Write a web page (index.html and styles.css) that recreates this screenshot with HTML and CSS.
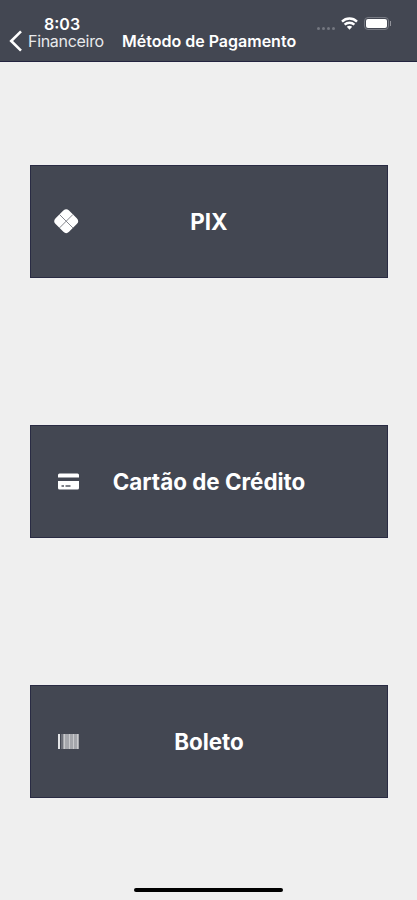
FILE: index.html
```html
<!DOCTYPE html>
<html lang="pt-BR">
<head>
    <meta charset="UTF-8">
    <meta name="viewport" content="width=device-width, initial-scale=1.0">
    <title>Método de Pagamento</title>
    <link rel="stylesheet" href="styles.css">
</head>
<body>
    <header class="header">
        <div class="status-bar">
            <span class="time">8:03</span>
            <div class="status-icons">
                <div class="signal"><i></i><i></i><i></i><i></i></div>
                <svg class="wifi" width="17" height="13" viewBox="0 0 17 13" fill="none" stroke="#fff" stroke-width="2.4">
                    <path d="M1 4.6C5.2.5 11.8.5 16 4.6"/>
                    <path d="M3.600 7.6c2.800-2.5 7-2.5 9.800 0"/>
                    <path d="M5.800 9.7c1.600-1.300 3.800-1.300 5.400 0L8.500 12.800z" fill="#fff" stroke="none"/>
                </svg>
                <div class="battery"><span></span></div>
            </div>
        </div>
        <nav class="nav-bar">
            <a href="#" class="back">
                <svg width="13" height="22" viewBox="0 0 13 22" fill="none" stroke="#fff" stroke-width="2.600">
                    <path d="M12 1.300L2.200 11l9.800 9.700"/>
                </svg>
                <span>Financeiro</span>
            </a>
            <h1>Método de Pagamento</h1>
        </nav>
    </header>
    <main class="methods">
        <button class="method">
            <svg class="icon" width="28" height="28" viewBox="0 0 28 28">
                <rect x="3.700" y="3.700" width="19" height="19" rx="4" fill="#fff" transform="rotate(45 13.200 13.200)"/>
                <path d="M6.500 6.500l13.400 13.400M19.900 6.500L6.500 19.900" stroke="#85878e" stroke-width="1"/>
            </svg>
            <span>PIX</span>
        </button>
        <button class="method">
            <svg class="icon" width="28" height="28" viewBox="0 0 28 28">
                <path d="M6.500 5.500h18q1.500 0 1.500 1.500v2.500H5V7q0-1.500 1.500-1.500z" fill="#fff"/>
                <path d="M5 13h21v7q0 1.500-1.500 1.500h-18Q5 21.500 5 20z" fill="#fff"/>
                <path d="M8.500 18h2.500M12.500 18h5" stroke="#555963" stroke-width="1.600"/>
            </svg>
            <span>Cartão de Crédito</span>
        </button>
        <button class="method">
            <svg class="icon" width="28" height="28" viewBox="0 0 28 28">
                <path d="M5 6h2v15H5z" fill="#e4e5e7"/>
                <path d="M8.500 6h1v15h-1z" fill="#9a9ca2"/>
                <path d="M10 6h16v15H10z" fill="#a5a7ac"/>
                <path d="M11.500 6v15M16.500 6v15M20.500 6v15M24.500 6v15" stroke="#c9cacd"/>
            </svg>
            <span>Boleto</span>
        </button>
    </main>
    <div class="home-indicator"></div>
</body>
</html>
```
FILE: styles.css
```css
* {
    box-sizing: border-box;
}
body {
    margin: 0;
    height: 100vh;
    display: flex;
    flex-direction: column;
    background: #efefef;
    font-family: Inter, "Liberation Sans", sans-serif;
    color: white;
    overflow: hidden;
}
.header {
    height: 62px;
    padding-top: 14px;
    background: #434752;
    border-bottom: 1px solid #23233f;
}
.status-bar {
    height: 19px;
    padding: 0 28px 0 44px;
    display: flex;
    justify-content: space-between;
    align-items: center;
}
.time {
    font-size: 16px;
    line-height: 16px;
    font-weight: 600;
}
.status-icons {
    display: flex;
    align-items: center;
}
.signal {
    display: flex;
    gap: 2px;
    margin: 9px 6px 0 0;
}
.signal i {
    width: 3px;
    height: 3px;
    border-radius: 50%;
    background: #747780;
}
.wifi {
    margin-right: 6px;
}
.battery {
    position: relative;
    width: 25px;
    height: 13px;
    padding: 1px;
    border: 1px solid #777a83;
    border-radius: 4px;
}
.battery span {
    display: block;
    height: 100%;
    border-radius: 2px;
    background: white;
}
.battery::after {
    content: "";
    position: absolute;
    right: -3px;
    top: 3px;
    width: 1px;
    height: 5px;
    background: #92949b;
}
.nav-bar {
    height: 16px;
    padding-left: 9px;
    display: flex;
    align-items: center;
    line-height: 16px;
}
.back {
    width: 113px;
    display: flex;
    align-items: center;
    gap: 6px;
    color: #e9eaec;
    text-decoration: none;
    font-size: 16px;
    letter-spacing: -0.3px;
}
.nav-bar h1 {
    margin: 0;
    font-size: 16px;
    font-weight: 600;
    white-space: nowrap;
}
.methods {
    padding: 103px 29px 0 30px;
    display: flex;
    flex-direction: column;
    gap: 147px;
}
.method {
    height: 113px;
    padding: 0 22px;
    display: grid;
    grid-template-columns: 28px 1fr 28px;
    align-items: center;
    border: 1px solid #292b43;
    background: #434752;
    color: white;
    font-family: inherit;
    font-size: 22.4px;
    font-weight: 650;
    cursor: pointer;
}
.home-indicator {
    width: 149px;
    height: 4px;
    margin: auto auto 8px;
    border-radius: 2px;
    background: black;
}
```
